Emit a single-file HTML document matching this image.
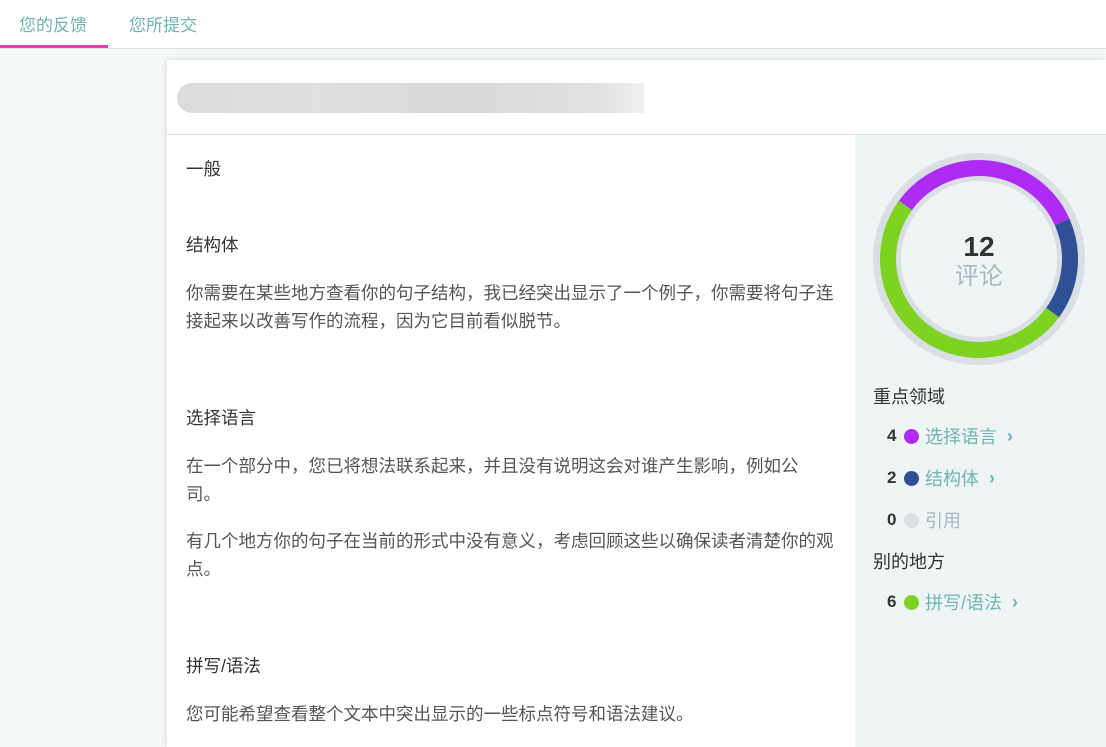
<!DOCTYPE html>
<html><head><meta charset="utf-8"><style>
*{margin:0;padding:0;box-sizing:border-box}
html,body{width:1106px;height:747px;overflow:hidden}
body{background:#f5f9f9;font-family:"Liberation Sans","Noto Sans CJK SC",sans-serif;position:relative}
.top{position:absolute;left:0;top:0;width:1106px;height:49px;background:#fff;border-bottom:1px solid #dde0e2}
.tab{position:absolute;top:11px;font-size:17px;color:#6fb3b3}
.ul{position:absolute;left:0;top:45px;width:108px;height:3px;background:#e43fb0}
.card{position:absolute;left:167px;top:60px;width:939px;height:687px;background:#fff;box-shadow:0 0 8px rgba(0,0,0,.15)}
.hdr{position:absolute;left:0;top:0;width:939px;height:75px;border-bottom:1px solid #dde0e2}
.blur{position:absolute;left:10px;top:23px;width:467px;height:30px;background:linear-gradient(90deg,#d8d8d8,#dcdcdc 30%,#d4d4d4 60%,#dedede 90%,#eee);border-radius:15px 0 0 15px;opacity:.9}
.side{position:absolute;left:688px;top:75px;width:251px;height:620px;background:#eff5f5}
.t{position:absolute;font-size:17.5px;white-space:nowrap}
.h{color:#333}.b{color:#555}
.lbl{position:absolute;font-size:18px;color:#333;white-space:nowrap}
.row{position:absolute;left:32px;font-size:18px;white-space:nowrap;display:flex;align-items:center}
.row b{color:#333;width:12px;font-weight:bold;font-size:17px}
.row i{display:inline-block;width:15px;height:15px;border-radius:50%;margin:0 6px 0 5px}
.row span{color:#6fb3b3}
.row em{font-style:normal;font-weight:bold;color:#6fb3b3;margin-left:10px;font-size:18px}
</style></head><body>
<div class="top">
<div class="tab" style="left:19px">您的反馈</div>
<div class="tab" style="left:129px">您所提交</div>
<div class="ul"></div>
</div>
<div class="card">
<div class="hdr"><div class="blur"></div></div>
<div class="t h" style="left:19px;top:96px">一般</div>
<div class="t h" style="left:19px;top:172px">结构体</div>
<div class="t b" style="left:19px;top:220px">你需要在某些地方查看你的句子结构，我已经突出显示了一个例子，你需要将句子连</div>
<div class="t b" style="left:19px;top:248px">接起来以改善写作的流程，因为它目前看似脱节。</div>
<div class="t h" style="left:19px;top:345px">选择语言</div>
<div class="t b" style="left:19px;top:393px">在一个部分中，您已将想法联系起来，并且没有说明这会对谁产生影响，例如公</div>
<div class="t b" style="left:19px;top:421px">司。</div>
<div class="t b" style="left:19px;top:468px">有几个地方你的句子在当前的形式中没有意义，考虑回顾这些以确保读者清楚你的观</div>
<div class="t b" style="left:19px;top:496px">点。</div>
<div class="t h" style="left:19px;top:593px">拼写/语法</div>
<div class="t b" style="left:19px;top:641px">您可能希望查看整个文本中突出显示的一些标点符号和语法建议。</div>
<div class="side">
<svg style="position:absolute;left:18px;top:18px" width="212" height="212" viewBox="0 0 212 212">
<circle cx="106" cy="106" r="106" fill="#dadee5"/>
<g transform="rotate(-144 106 106)" fill="none" stroke-width="16">
<circle cx="106" cy="106" r="91" stroke="#ad2bf5" stroke-dasharray="190.6 571.8"/>
<circle cx="106" cy="106" r="91" stroke="#2f5096" stroke-dasharray="0 190.6 95.3 476.5"/>
<circle cx="106" cy="106" r="91" stroke="#7ed321" stroke-dasharray="0 285.9 285.9 0"/>
</g>
<circle cx="106" cy="106" r="78" fill="#eff5f5"/>
<text x="106" y="103" text-anchor="middle" font-family="Liberation Sans" font-weight="bold" font-size="28" fill="#333">12</text>
<text x="106" y="131" text-anchor="middle" font-family="Liberation Sans,Noto Sans CJK SC" font-size="24" fill="#a8b8c4">评论</text>
</svg>
<div class="lbl" style="left:18px;top:248px">重点领域</div>
<div class="row" style="top:288px"><b>4</b><i style="background:#ad2bf5"></i><span>选择语言</span><em>›</em></div>
<div class="row" style="top:330px"><b>2</b><i style="background:#2f5096"></i><span>结构体</span><em>›</em></div>
<div class="row" style="top:372px"><b>0</b><i style="background:#dadee5"></i><span style="color:#a8b8c4">引用</span></div>
<div class="lbl" style="left:18px;top:413px">别的地方</div>
<div class="row" style="top:454px"><b>6</b><i style="background:#7ed321"></i><span>拼写/语法</span><em>›</em></div>
</div>
</div>
</body></html>
